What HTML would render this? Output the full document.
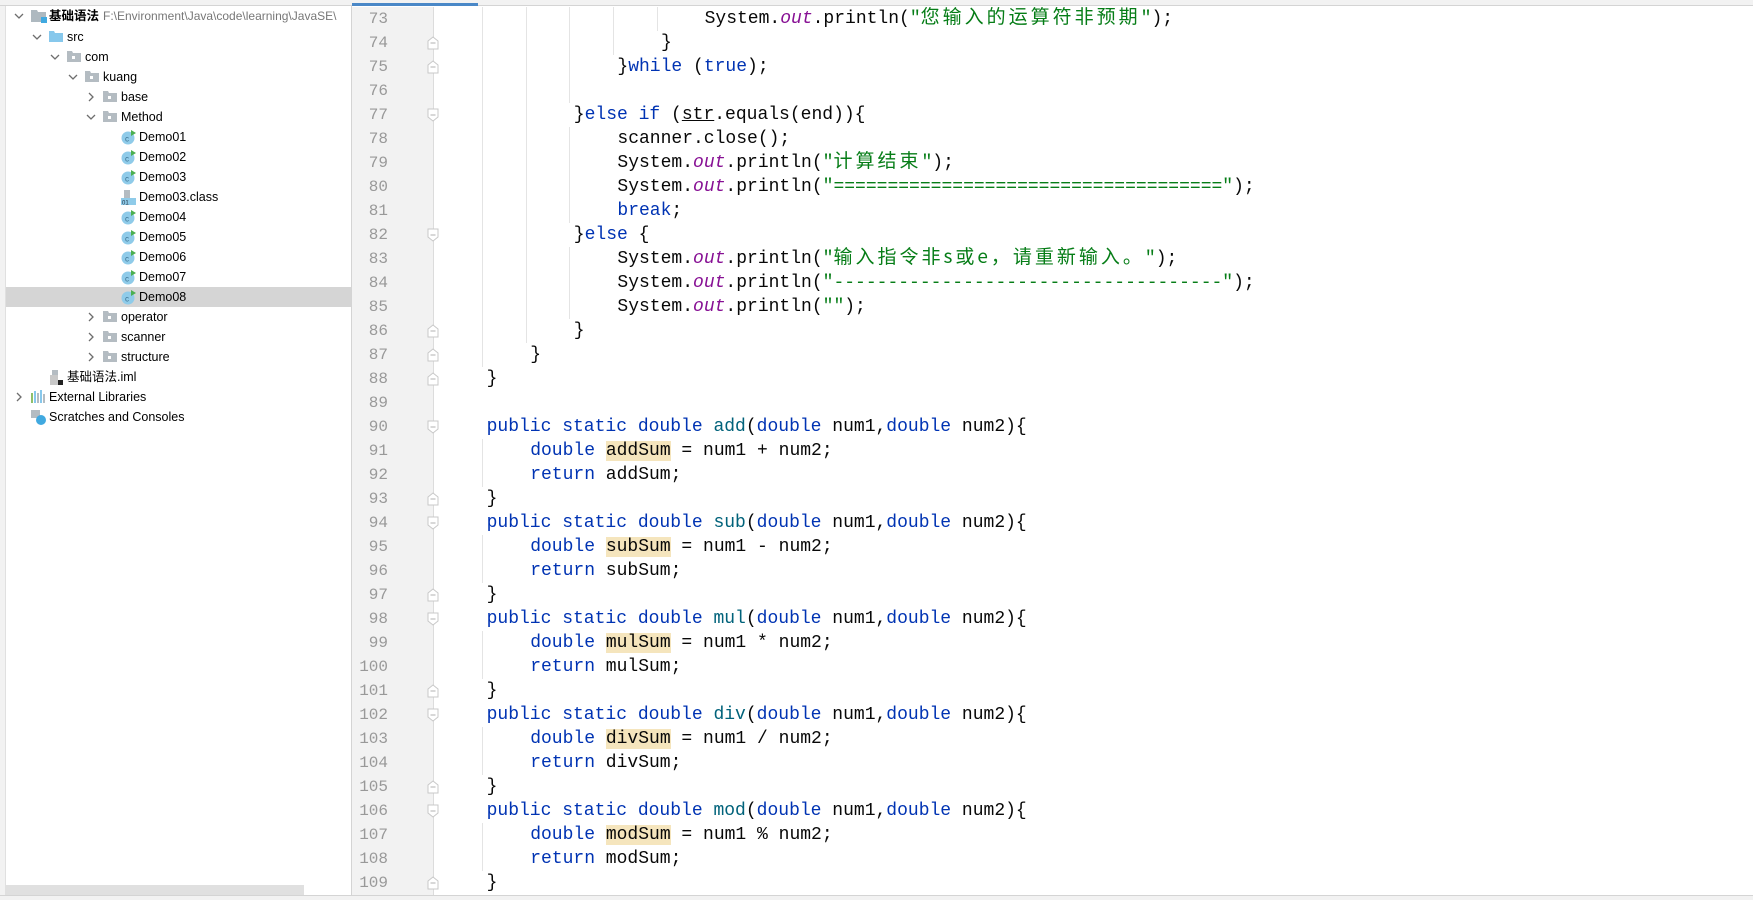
<!DOCTYPE html>
<html><head><meta charset="utf-8">
<style>
*{margin:0;padding:0;box-sizing:border-box}
body{width:1753px;height:900px;overflow:hidden;background:#fff;position:relative;font-family:"Liberation Sans","Noto Sans CJK SC",sans-serif}
.abs{position:absolute}
#top{left:0;top:0;width:1753px;height:6px;background:#f2f2f2;border-bottom:1px solid #d4d4d4}
#tab{left:352px;top:3px;width:126px;height:3px;background:#4a88c7}
#leftstrip{left:0;top:6px;width:6px;height:889px;background:#f2f2f2;border-right:1px solid #e0e0e0}
#side{left:6px;top:6px;width:346px;height:889px;background:#fff;border-right:1px solid #d4d4d4;overflow:hidden}
.row{position:absolute;left:0;width:346px;height:20px;font-size:12.5px;line-height:20px;color:#000;white-space:nowrap}
.row.sel{background:#d5d5d5}
.chev{position:absolute;top:0;width:10px;height:20px}
.ico{position:absolute;top:3px}
.txt{position:absolute;top:0}
#sscroll{left:6px;top:885px;width:298px;height:10px;background:#e0e0e0}
#gutter{left:352px;top:7px;width:82px;height:888px;background:#f2f2f2;border-right:1px solid #dcdcdc}
.ln{position:absolute;left:352px;width:36px;text-align:right;font-family:"Liberation Mono",monospace;font-size:16px;line-height:24px;color:#999;height:24px}
.cl{position:absolute;left:443px;height:24px;line-height:24px;font-family:"Liberation Mono","Noto Sans CJK SC",monospace;font-size:18px;color:#080808;white-space:pre}
.k{color:#0033b3}.o{color:#871094;font-style:italic}.s{color:#067d17}.m{color:#00627a}
.h{background:#f5e5bd}
.cj{font-family:"Noto Sans CJK SC",sans-serif;font-size:19px;letter-spacing:3px;line-height:0}
.g{position:absolute;width:1px;background:#e4e4e4;height:24px}
#bottom{left:0;top:895px;width:1753px;height:5px;background:#f2f2f2;border-top:1px solid #d4d4d4}
</style></head><body>
<div id="top" class="abs"></div>
<div id="tab" class="abs"></div>
<div id="leftstrip" class="abs"></div>
<div id="side" class="abs">
<div class="row" style="top:0"><svg class="chev" style="left:8px" viewBox="0 0 10 20"><path d="M1 8l4 4 4-4" fill="none" stroke="#6e6e6e" stroke-width="1.3"/></svg><svg class="ico" style="left:25px" width="16" height="14"><path d="M0 1h6l1 2h8v10H0z" fill="#aeb9c0"/><rect x="10" y="8" width="6" height="6" fill="#40a9e0"/></svg><span class="txt" style="left:43px;font-weight:bold">基础语法</span><span class="txt" style="left:97px;color:#777;font-size:12px">F:\Environment\Java\code\learning\JavaSE\</span></div>
<div class="row" style="top:21px"><svg class="chev" style="left:26px" viewBox="0 0 10 20"><path d="M1 8l4 4 4-4" fill="none" stroke="#6e6e6e" stroke-width="1.3"/></svg><svg class="ico" style="left:43px" width="14" height="12"><path d="M0 1h5l1 2h8v9H0z" fill="#87c8ec"/></svg><span class="txt" style="left:61px">src</span></div>
<div class="row" style="top:41px"><svg class="chev" style="left:44px" viewBox="0 0 10 20"><path d="M1 8l4 4 4-4" fill="none" stroke="#6e6e6e" stroke-width="1.3"/></svg><svg class="ico" style="left:61px" width="14" height="12"><path d="M0 1h5l1 2h8v9H0z" fill="#b4bcc2"/><rect x="5" y="6" width="3" height="3" fill="#fff"/></svg><span class="txt" style="left:79px">com</span></div>
<div class="row" style="top:61px"><svg class="chev" style="left:62px" viewBox="0 0 10 20"><path d="M1 8l4 4 4-4" fill="none" stroke="#6e6e6e" stroke-width="1.3"/></svg><svg class="ico" style="left:79px" width="14" height="12"><path d="M0 1h5l1 2h8v9H0z" fill="#b4bcc2"/><rect x="5" y="6" width="3" height="3" fill="#fff"/></svg><span class="txt" style="left:97px">kuang</span></div>
<div class="row" style="top:81px"><svg class="chev" style="left:80px" viewBox="0 0 10 20"><path d="M3 6l4 4-4 4" fill="none" stroke="#6e6e6e" stroke-width="1.3"/></svg><svg class="ico" style="left:97px" width="14" height="12"><path d="M0 1h5l1 2h8v9H0z" fill="#b4bcc2"/><rect x="5" y="6" width="3" height="3" fill="#fff"/></svg><span class="txt" style="left:115px">base</span></div>
<div class="row" style="top:101px"><svg class="chev" style="left:80px" viewBox="0 0 10 20"><path d="M1 8l4 4 4-4" fill="none" stroke="#6e6e6e" stroke-width="1.3"/></svg><svg class="ico" style="left:97px" width="14" height="12"><path d="M0 1h5l1 2h8v9H0z" fill="#b4bcc2"/><rect x="5" y="6" width="3" height="3" fill="#fff"/></svg><span class="txt" style="left:115px">Method</span></div>
<div class="row" style="top:121px"><svg class="ico" style="left:115px" width="15" height="15"><circle cx="7" cy="8" r="6.5" fill="#8fcbe9"/><text x="4" y="11.5" font-size="8" fill="#3a6f8f" font-family="Liberation Sans">c</text><path d="M10 0l5 3-5 3z" fill="#4caf50"/></svg><span class="txt" style="left:133px">Demo01</span></div>
<div class="row" style="top:141px"><svg class="ico" style="left:115px" width="15" height="15"><circle cx="7" cy="8" r="6.5" fill="#8fcbe9"/><text x="4" y="11.5" font-size="8" fill="#3a6f8f" font-family="Liberation Sans">c</text><path d="M10 0l5 3-5 3z" fill="#4caf50"/></svg><span class="txt" style="left:133px">Demo02</span></div>
<div class="row" style="top:161px"><svg class="ico" style="left:115px" width="15" height="15"><circle cx="7" cy="8" r="6.5" fill="#8fcbe9"/><text x="4" y="11.5" font-size="8" fill="#3a6f8f" font-family="Liberation Sans">c</text><path d="M10 0l5 3-5 3z" fill="#4caf50"/></svg><span class="txt" style="left:133px">Demo03</span></div>
<div class="row" style="top:181px"><svg class="ico" style="left:115px" width="15" height="15"><path d="M3 0h6v8H3z" fill="#b4bcc2"/><rect x="0" y="8" width="15" height="7" fill="#8fcbe9"/><text x="1" y="14.5" font-size="6" fill="#234">01</text></svg><span class="txt" style="left:133px">Demo03.class</span></div>
<div class="row" style="top:201px"><svg class="ico" style="left:115px" width="15" height="15"><circle cx="7" cy="8" r="6.5" fill="#8fcbe9"/><text x="4" y="11.5" font-size="8" fill="#3a6f8f" font-family="Liberation Sans">c</text><path d="M10 0l5 3-5 3z" fill="#4caf50"/></svg><span class="txt" style="left:133px">Demo04</span></div>
<div class="row" style="top:221px"><svg class="ico" style="left:115px" width="15" height="15"><circle cx="7" cy="8" r="6.5" fill="#8fcbe9"/><text x="4" y="11.5" font-size="8" fill="#3a6f8f" font-family="Liberation Sans">c</text><path d="M10 0l5 3-5 3z" fill="#4caf50"/></svg><span class="txt" style="left:133px">Demo05</span></div>
<div class="row" style="top:241px"><svg class="ico" style="left:115px" width="15" height="15"><circle cx="7" cy="8" r="6.5" fill="#8fcbe9"/><text x="4" y="11.5" font-size="8" fill="#3a6f8f" font-family="Liberation Sans">c</text><path d="M10 0l5 3-5 3z" fill="#4caf50"/></svg><span class="txt" style="left:133px">Demo06</span></div>
<div class="row" style="top:261px"><svg class="ico" style="left:115px" width="15" height="15"><circle cx="7" cy="8" r="6.5" fill="#8fcbe9"/><text x="4" y="11.5" font-size="8" fill="#3a6f8f" font-family="Liberation Sans">c</text><path d="M10 0l5 3-5 3z" fill="#4caf50"/></svg><span class="txt" style="left:133px">Demo07</span></div>
<div class="row sel" style="top:281px"><svg class="ico" style="left:115px" width="15" height="15"><circle cx="7" cy="8" r="6.5" fill="#8fcbe9"/><text x="4" y="11.5" font-size="8" fill="#3a6f8f" font-family="Liberation Sans">c</text><path d="M10 0l5 3-5 3z" fill="#4caf50"/></svg><span class="txt" style="left:133px">Demo08</span></div>
<div class="row" style="top:301px"><svg class="chev" style="left:80px" viewBox="0 0 10 20"><path d="M3 6l4 4-4 4" fill="none" stroke="#6e6e6e" stroke-width="1.3"/></svg><svg class="ico" style="left:97px" width="14" height="12"><path d="M0 1h5l1 2h8v9H0z" fill="#b4bcc2"/><rect x="5" y="6" width="3" height="3" fill="#fff"/></svg><span class="txt" style="left:115px">operator</span></div>
<div class="row" style="top:321px"><svg class="chev" style="left:80px" viewBox="0 0 10 20"><path d="M3 6l4 4-4 4" fill="none" stroke="#6e6e6e" stroke-width="1.3"/></svg><svg class="ico" style="left:97px" width="14" height="12"><path d="M0 1h5l1 2h8v9H0z" fill="#b4bcc2"/><rect x="5" y="6" width="3" height="3" fill="#fff"/></svg><span class="txt" style="left:115px">scanner</span></div>
<div class="row" style="top:341px"><svg class="chev" style="left:80px" viewBox="0 0 10 20"><path d="M3 6l4 4-4 4" fill="none" stroke="#6e6e6e" stroke-width="1.3"/></svg><svg class="ico" style="left:97px" width="14" height="12"><path d="M0 1h5l1 2h8v9H0z" fill="#b4bcc2"/><rect x="5" y="6" width="3" height="3" fill="#fff"/></svg><span class="txt" style="left:115px">structure</span></div>
<div class="row" style="top:361px"><svg class="ico" style="left:44px" width="14" height="15"><path d="M2 0h6v9H2z" fill="#b4bcc2"/><rect x="0" y="5" width="8" height="10" fill="#c8c8c8"/><rect x="8" y="10" width="5" height="5" fill="#222"/></svg><span class="txt" style="left:61px">基础语法.iml</span></div>
<div class="row" style="top:381px"><svg class="chev" style="left:8px" viewBox="0 0 10 20"><path d="M3 6l4 4-4 4" fill="none" stroke="#6e6e6e" stroke-width="1.3"/></svg><svg class="ico" style="left:25px" width="14" height="14"><rect x="0" y="3" width="2" height="10" fill="#8fbf6a"/><rect x="3" y="1" width="2" height="12" fill="#87c8ec"/><rect x="6" y="3" width="2" height="10" fill="#b4bcc2"/><rect x="9" y="0" width="2" height="13" fill="#87c8ec"/><rect x="12" y="4" width="2" height="9" fill="#b4bcc2"/></svg><span class="txt" style="left:43px">External Libraries</span></div>
<div class="row" style="top:401px"><svg class="ico" style="left:25px" width="15" height="15"><path d="M0 0h9v8H0z" fill="#b4bcc2"/><circle cx="10" cy="10" r="5" fill="#40a9e0"/></svg><span class="txt" style="left:43px">Scratches and Consoles</span></div>
</div>
<div id="sscroll" class="abs"></div>
<div id="gutter" class="abs"></div>
<div id="code"></div>
<div id="bottom" class="abs"></div>
<script>
(function(){
var L=[
[24,'System.<span class="o">out</span>.println(<span class="s">"<span class="cj">您输入的运算符非预期</span>"</span>);'],
[20,'}'],
[16,'}<span class="k">while</span> (<span class="k">true</span>);'],
[-1,''],
[12,'}<span class="k">else if</span> (<u>str</u>.equals(end)){'],
[16,'scanner.close();'],
[16,'System.<span class="o">out</span>.println(<span class="s">"<span class="cj">计算结束</span>"</span>);'],
[16,'System.<span class="o">out</span>.println(<span class="s">"===================================="</span>);'],
[16,'<span class="k">break</span>;'],
[12,'}<span class="k">else</span> {'],
[16,'System.<span class="o">out</span>.println(<span class="s">"<span class="cj">输入指令非s或e，请重新输入。</span>"</span>);'],
[16,'System.<span class="o">out</span>.println(<span class="s">"------------------------------------"</span>);'],
[16,'System.<span class="o">out</span>.println(<span class="s">""</span>);'],
[12,'}'],[8,'}'],[4,'}'],[-1,'']
];
var ops=[['add','+'],['sub','-'],['mul','*'],['div','/'],['mod','%']];
ops.forEach(function(p){
L.push([4,'<span class="k">public static double</span> <span class="m">'+p[0]+'</span>(<span class="k">double</span> num1,<span class="k">double</span> num2){']);
L.push([8,'<span class="k">double</span> <span class="h">'+p[0]+'Sum</span> = num1 '+p[1]+' num2;']);
L.push([8,'<span class="k">return</span> '+p[0]+'Sum;']);
L.push([4,'}']);
});
var folds={74:1,75:1,77:2,82:2,86:1,87:1,88:1,90:2,93:1,94:2,97:1,98:2,101:1,102:2,105:1,106:2,109:1};
var h='';var prev=0;
for(var i=0;i<L.length;i++){
 var n=73+i, ty=7+i*24, ind=L[i][0];
 var gi=ind<0?prev+4:ind; if(ind>=0)prev=ind;
 if(n==76)gi=16; if(n==89)gi=4;
 for(var c=4;c<gi;c+=4){h+='<div class="g" style="left:'+Math.round(443+c*10.9-4.5)+'px;top:'+ty+'px"></div>';}
 h+='<div class="ln" style="top:'+ty+'px">'+n+'</div>';
 if(ind>=0)h+='<div class="cl" style="left:'+(443+ind*10.9)+'px;top:'+ty+'px">'+L[i][1]+'</div>';
 if(folds[n]){
  var d=folds[n]==1?'M1 5l5-4 5 4v8H1z':'M1 1h10v8l-5 4-5-4z';
  h+='<svg class="abs" style="left:427px;top:'+(ty+5)+'px" width="13" height="15"><path d="'+d+'" fill="#fff" stroke="#c8c8c8"/><path d="M3.5 7h5" stroke="#b0b0b0"/></svg>';
 }
}
document.getElementById('code').innerHTML=h;
})();
</script>
</body></html>
